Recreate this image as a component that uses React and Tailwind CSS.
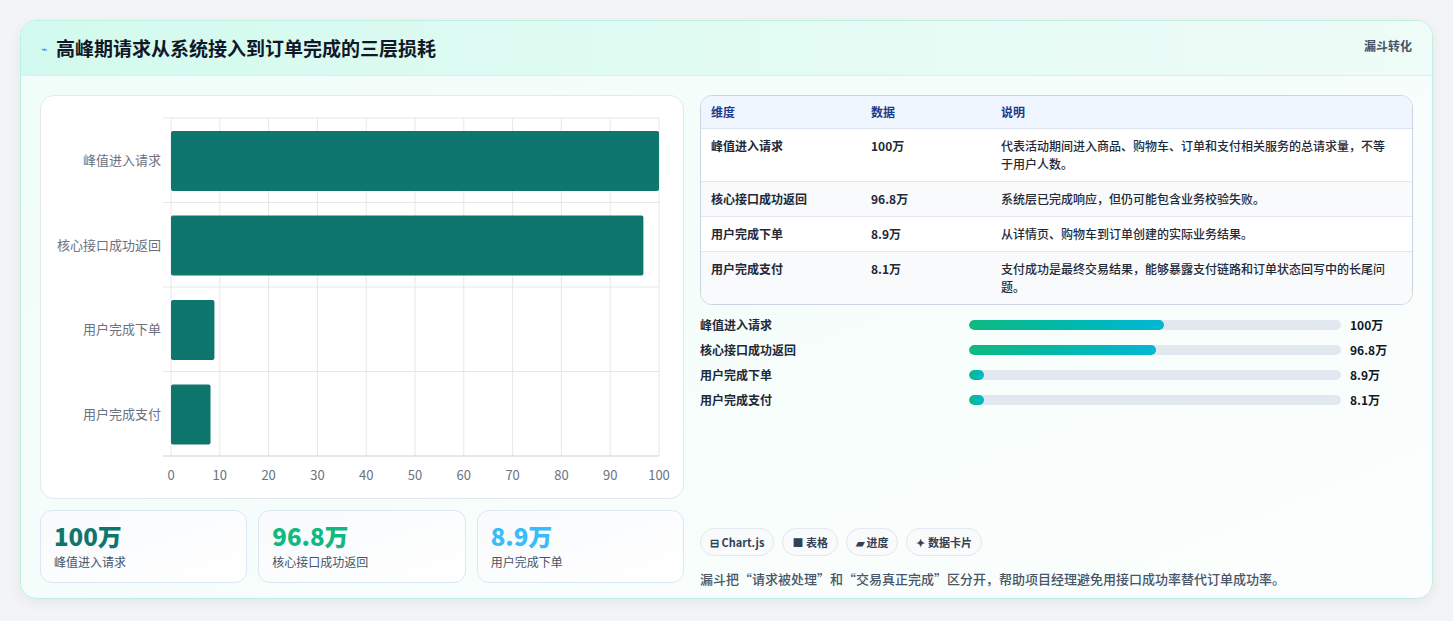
const F = { fontFamily: '"Noto Sans CJK SC", "Noto Sans", sans-serif' };

const rows = [
  ['峰值进入请求', '100万', '代表活动期间进入商品、购物车、订单和支付相关服务的总请求量，不等于用户人数。'],
  ['核心接口成功返回', '96.8万', '系统层已完成响应，但仍可能包含业务校验失败。'],
  ['用户完成下单', '8.9万', '从详情页、购物车到订单创建的实际业务结果。'],
  ['用户完成支付', '8.1万', '支付成功是最终交易结果，能够暴露支付链路和订单状态回写中的长尾问题。'],
];
const prog = [
  ['峰值进入请求', 195, '100万'],
  ['核心接口成功返回', 187, '96.8万'],
  ['用户完成下单', 15, '8.9万'],
  ['用户完成支付', 15, '8.1万'],
];

function Chart() {
  const x0 = 130, w = 488, y0 = 22, h = 338;
  const vals = [100, 96.8, 8.9, 8.1];
  const labels = ['峰值进入请求', '核心接口成功返回', '用户完成下单', '用户完成支付'];
  const rh = h / 4;
  return (
    <svg width="644" height="403" style={F}>
      {Array.from({ length: 11 }).map((_, i) => {
        const x = x0 + (w * i) / 10;
        return (
          <g key={i}>
            <line x1={x} x2={x} y1={y0} y2={y0 + h} stroke="#e5e7eb" />
            <text x={x} y={y0 + h + 24} fontSize="13" fill="#6b7280" textAnchor="middle">{i * 10}</text>
          </g>
        );
      })}
      {[0, 1, 2, 3, 4].map(i => (
        <line key={i} x1={x0 - 8} x2={x0 + w} y1={y0 + i * rh} y2={y0 + i * rh} stroke={i === 4 ? '#cbd5e1' : '#e5e7eb'} />
      ))}
      {vals.map((v, i) => (
        <g key={i}>
          <rect x={x0} y={y0 + i * rh + 13} width={(w * v) / 100} height={60} rx="2" fill="#0f766e" />
          <text x={x0 - 10} y={y0 + i * rh + rh / 2 + 5} fontSize="13" fill="#6b7280" textAnchor="end">{labels[i]}</text>
        </g>
      ))}
    </svg>
  );
}

export default function App() {
  return (
    <div className="min-h-[621px] bg-[#f3f4f6] pt-[20px] px-[20px]" style={F}>
      <div className="w-[1413px] h-[579px] rounded-[16px] border border-[#bfeee4] bg-gradient-to-br from-[#f0fdf8] to-[#fbfefd] shadow-[0_4px_14px_rgba(0,0,0,0.06)] overflow-hidden">
        <div className="h-[55px] flex items-center justify-between px-[20px] border-b border-[#d5f3ea] bg-gradient-to-r from-[#d3faee] to-[#effcf8]">
          <div className="flex items-center gap-[8px]">
            <span className="text-[11px] text-[#3b82f6]">⌁</span>
            <span className="text-[19px] font-bold text-[#111827]">高峰期请求从系统接入到订单完成的三层损耗</span>
          </div>
          <span className="text-[12px] font-semibold text-[#475569] self-start mt-[16px]">漏斗转化</span>
        </div>
        <div className="flex gap-[16px] p-[19px]">
          <div className="w-[644px] flex flex-col gap-[11px]">
            <div className="h-[404px] rounded-[14px] border border-[#e2e8f0] bg-white overflow-hidden"><Chart /></div>
            <div className="flex gap-[11px]">
              {[['100万', '#0f766e', '峰值进入请求'], ['96.8万', '#10b981', '核心接口成功返回'], ['8.9万', '#38bdf8', '用户完成下单']].map(([v, c, l]) => (
                <div key={l} className="w-[208px] h-[73px] rounded-[12px] border border-[#dbe7f3] bg-gradient-to-br from-[#f8fafc] to-white px-[13px] pt-[10px]">
                  <div className="text-[24px] font-extrabold leading-[30px]" style={{ color: c }}>{v}</div>
                  <div className="text-[12px] text-[#475569] mt-[2px]">{l}</div>
                </div>
              ))}
            </div>
          </div>
          <div className="w-[714px] flex flex-col">
            <div className="rounded-[12px] border border-[#cbd5e1] overflow-hidden bg-white text-[12px]">
              <div className="flex h-[33px] items-center bg-[#eff6ff] border-b border-[#dbe3ee] text-[#1e3a8a] font-semibold">
                <div className="w-[170px] pl-[10px]">维度</div><div className="w-[130px]">数据</div><div>说明</div>
              </div>
              {rows.map(([a, b, c], i) => (
                <div key={a} className={`flex py-[8px] ${i % 2 ? 'bg-[#f8fafc]' : 'bg-white'} ${i < 3 ? 'border-b border-[#e5e7eb]' : ''} text-[#1f2937] font-semibold leading-[18px]`}>
                  <div className="w-[170px] pl-[10px] shrink-0">{a}</div><div className="w-[130px] shrink-0">{b}</div><div className="w-[390px] font-medium">{c}</div>
                </div>
              ))}
            </div>
            <div className="flex flex-col gap-[7px] mt-[11px]">
              {prog.map(([l, w, v]) => (
                <div key={l} className="flex items-center h-[18px] text-[12px] font-semibold text-[#1f2937]">
                  <div className="w-[269px]">{l}</div>
                  <div className="w-[372px] h-[10px] rounded-full bg-[#e2e8f0] overflow-hidden">
                    <div className="h-full rounded-full bg-gradient-to-r from-[#10b981] to-[#06b6d4]" style={{ width: w }} />
                  </div>
                  <div className="ml-[9px] text-[#111827] font-bold">{v}</div>
                </div>
              ))}
            </div>
            <div className="flex gap-[8px] mt-[119px] text-[11px] font-semibold text-[#334155]">
              {['⊟ Chart.js', '■ 表格', '▰ 进度', '✦ 数据卡片'].map(t => (
                <span key={t} className="h-[28px] px-[9px] flex items-center rounded-full border border-[#e2e8f0] bg-[#f8fafc]">{t}</span>
              ))}
            </div>
            <div className="mt-[13px] text-[13px] font-medium text-[#475569]">漏斗把“请求被处理”和“交易真正完成”区分开，帮助项目经理避免用接口成功率替代订单成功率。</div>
          </div>
        </div>
      </div>
    </div>
  );
}
